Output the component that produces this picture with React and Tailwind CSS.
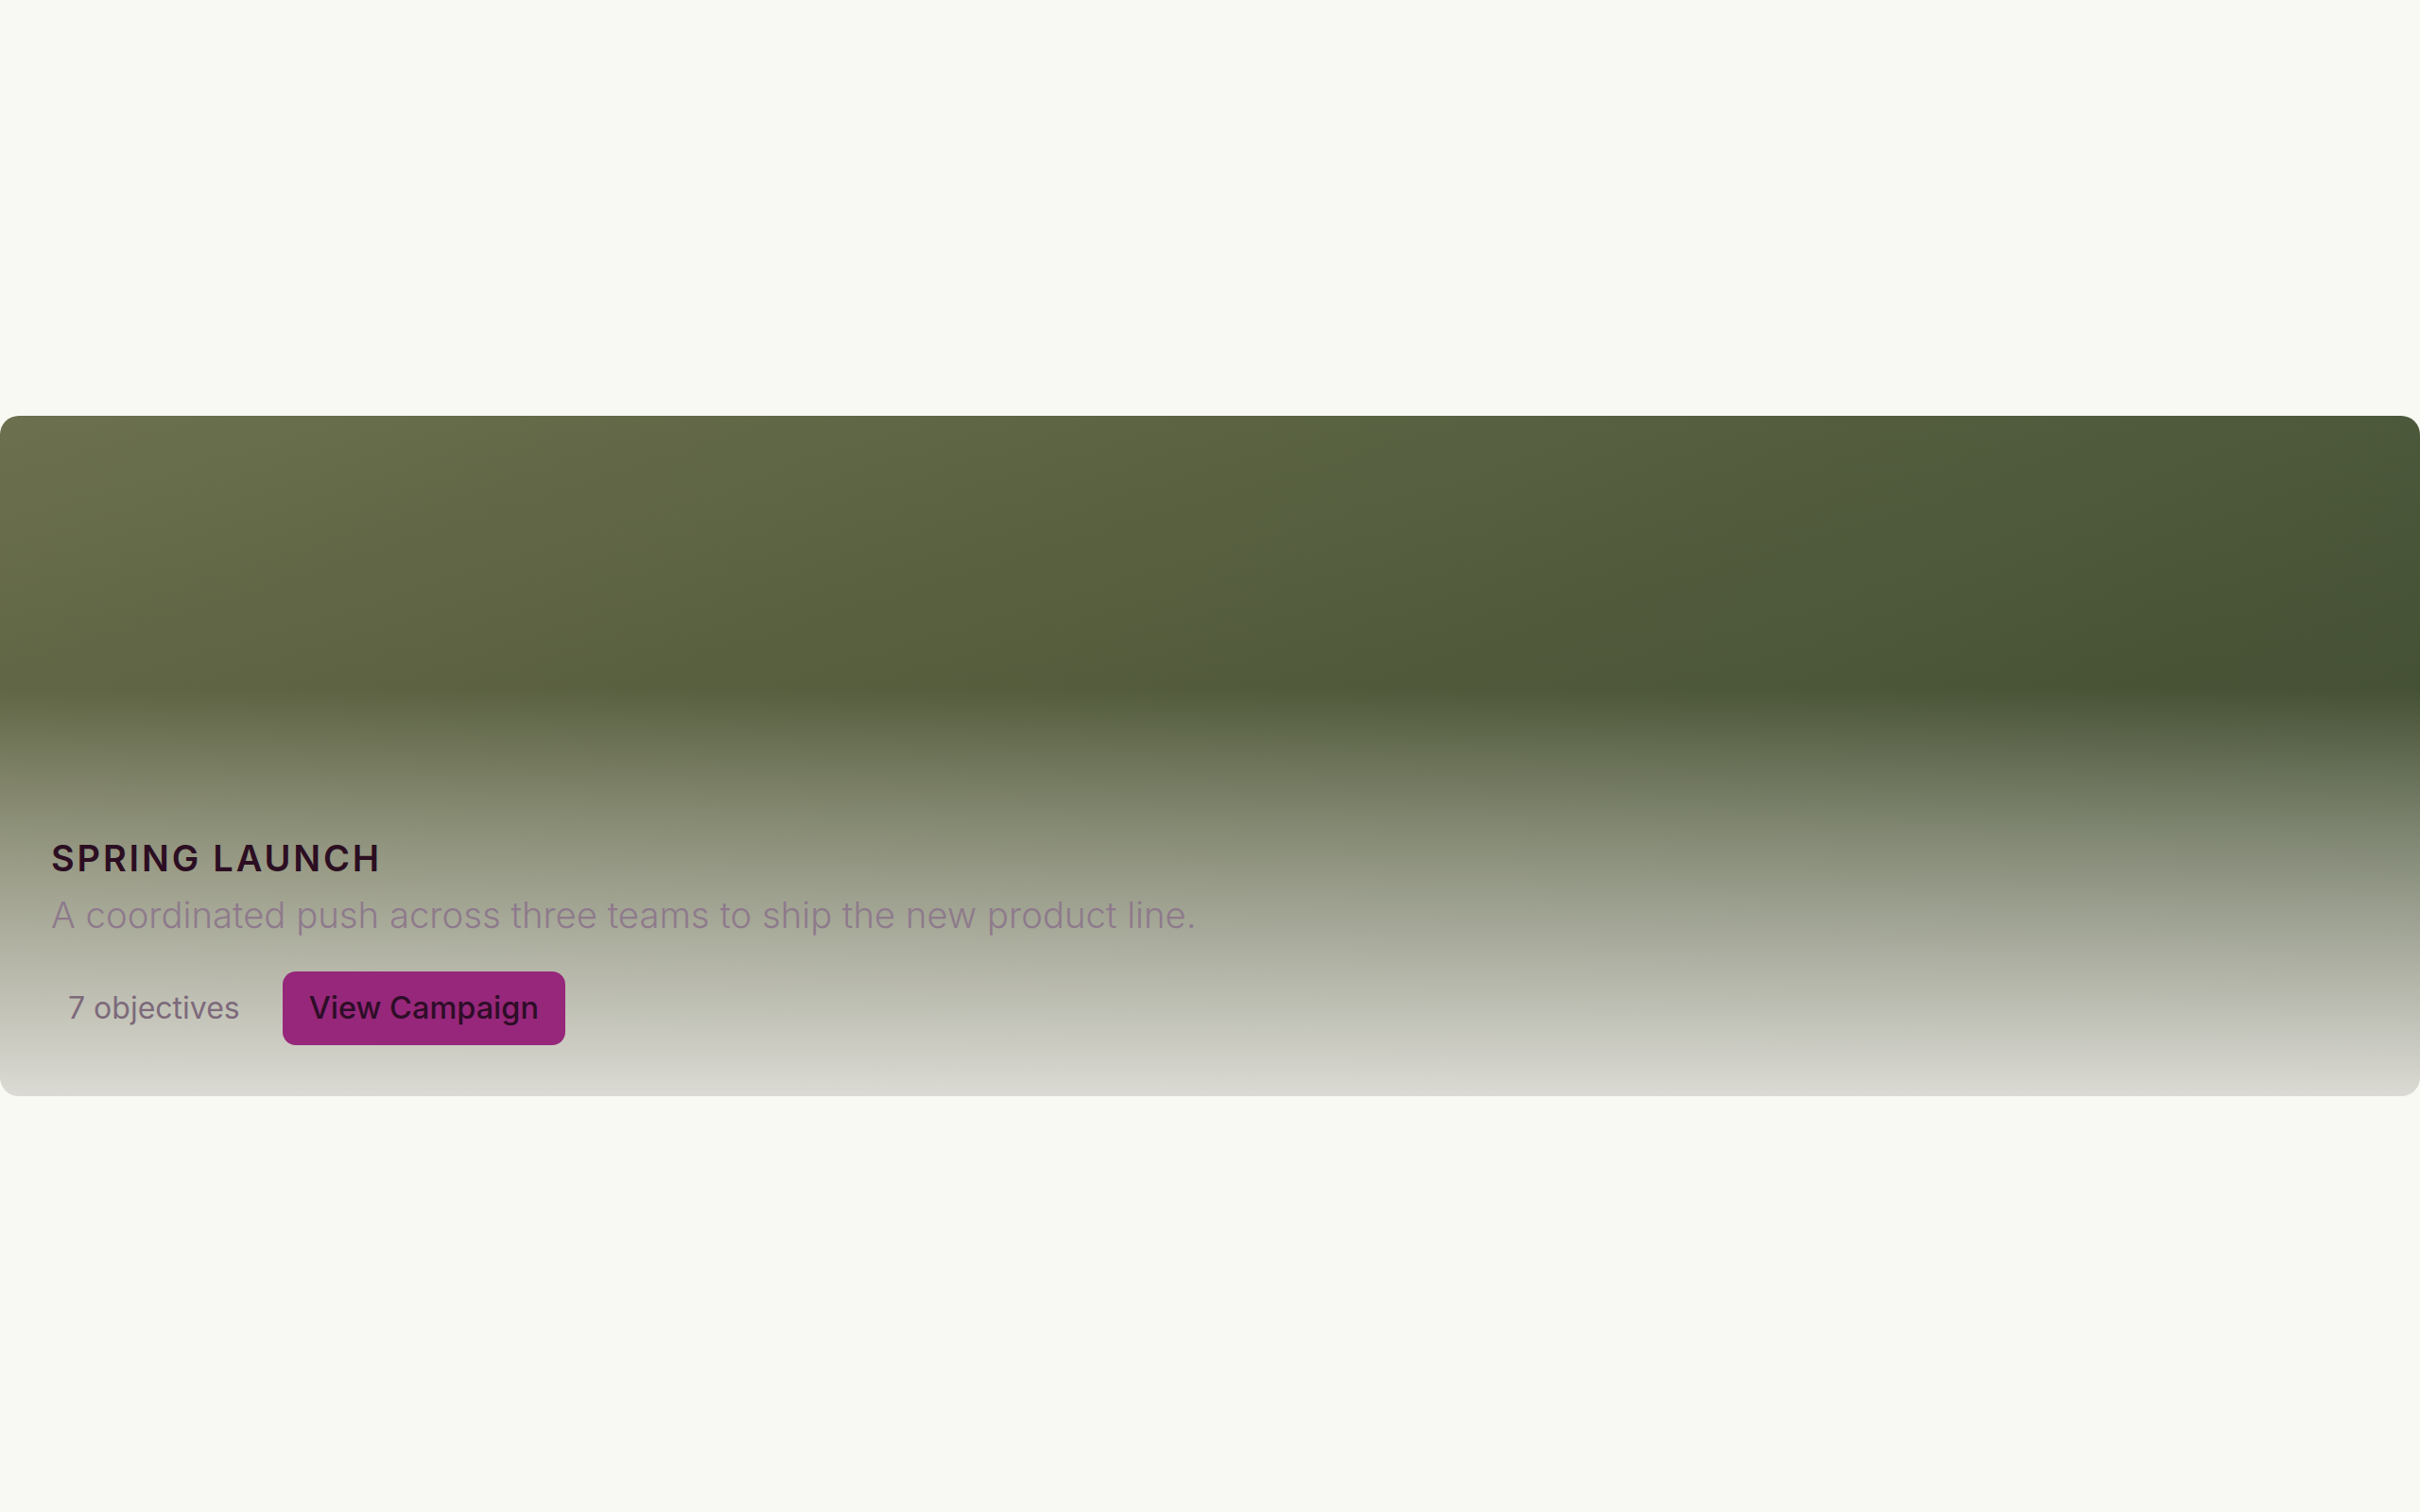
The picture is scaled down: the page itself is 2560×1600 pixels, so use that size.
import React from "react";

export default function App() {
  return (
    <div className="flex h-[1600px] w-full items-center bg-[#f8f9f3]" style={{ fontFamily: "Inter, 'Noto Sans', sans-serif" }}>
      <div className="flex h-[720px] w-full flex-col justify-end overflow-hidden rounded-[20px] bg-[linear-gradient(180deg,rgba(218,217,211,0)_40%,rgba(218,217,211,0.55)_72%,rgba(219,218,212,1)_100%),linear-gradient(180deg,rgba(20,30,10,0)_0%,rgba(20,30,10,0.12)_42%,rgba(20,30,10,0.06)_60%),linear-gradient(100deg,#6c704e_0%,#5c6443_45%,#4b573a_100%)] p-[54px]">
        <h2 className="mb-[11px] text-[38px] font-semibold uppercase leading-[46px] tracking-[0.075em] text-[#2c0e22]">
          Spring Launch
        </h2>
        <p className="mb-[33px] text-[38.3px] font-light leading-[53px] text-[#8e7a8c]">
          A coordinated push across three teams to ship the new product line.
        </p>
        <div className="flex items-center gap-[45px]">
          <span className="pl-[18px] text-[32px] font-normal leading-[48px] text-[#7d6a7b]">7 objectives</span>
          <button className="h-[78px] rounded-[14px] bg-[#96277a] px-[28px] text-[32.5px] font-medium leading-[48px] text-[#2d0d27]">
            View Campaign
          </button>
        </div>
      </div>
    </div>
  );
}
